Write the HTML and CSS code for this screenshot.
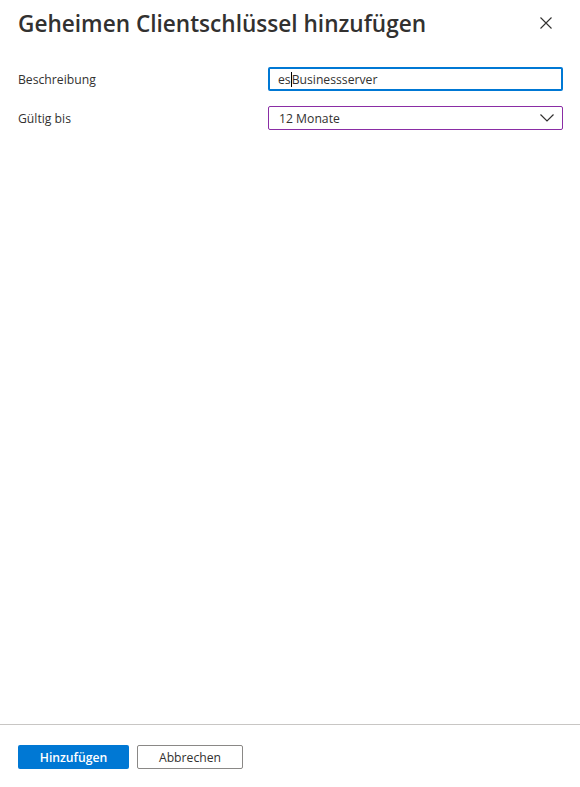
FILE: index.html
```html
<!DOCTYPE html>
<html lang="de">
<head>
  <meta charset="UTF-8">
  <title>Geheimen Clientschlüssel hinzufügen</title>
  <link rel="stylesheet" href="styles.css">
</head>
<body>
  <div class="panel">
    <div class="panel-header">
      <h1 class="panel-title">Geheimen Clientschlüssel hinzufügen</h1>
      <button class="close-btn" aria-label="Schließen">
        <svg width="12" height="12" viewBox="0 0 12 12"><path d="M0.5 0.5L11.5 11.5M11.5 0.5L0.5 11.5" stroke="#323130" stroke-width="1.1" fill="none"/></svg>
      </button>
    </div>
    <div class="panel-body">
      <div class="field-row">
        <label class="field-label">Beschreibung</label>
        <div class="text-input focused"><span>es</span><span class="caret"></span><span>Businessserver</span></div>
      </div>
      <div class="field-row">
        <label class="field-label">Gültig bis</label>
        <div class="dropdown">
          <span>12 Monate</span>
          <svg class="chevron" width="14" height="8" viewBox="0 0 14 8"><path d="M0.5 0.5L7 7L13.5 0.5" stroke="#323130" stroke-width="1.2" fill="none"/></svg>
        </div>
      </div>
    </div>
    <div class="panel-footer">
      <button class="btn btn-primary">Hinzufügen</button>
      <button class="btn btn-default">Abbrechen</button>
    </div>
  </div>
</body>
</html>
```

FILE: styles.css
```css
html, body {
  height: 100%;
  margin: 0;
  padding: 0;
  font-family: 'Open Sans', 'Noto Sans', sans-serif;
  background: #fff;
  color: #323130;
}
.panel {
  height: 100vh;
  display: flex;
  flex-direction: column;
}
.panel-header {
  display: flex;
  align-items: center;
  justify-content: space-between;
  padding: 6px 22px 0 18px;
  height: 34px;
}
.panel-title {
  margin: 0;
  font-size: 22.6px;
  font-weight: 600;
  color: #323130;
}
.close-btn {
  background: none;
  border: none;
  padding: 0;
  width: 24px;
  height: 24px;
  display: flex;
  align-items: center;
  justify-content: center;
  cursor: pointer;
}
.panel-body {
  flex: 1;
  padding: 27px 17px 0 18px;
  display: flex;
  flex-direction: column;
  gap: 15px;
}
.field-row {
  display: flex;
  align-items: center;
}
.field-label {
  width: 250px;
  font-size: 12.2px;
  color: #323130;
}
.text-input, .dropdown {
  flex: 1;
  height: 24px;
  box-sizing: border-box;
  display: flex;
  align-items: center;
  font-size: 12.2px;
  color: #323130;
}
.text-input {
  border: 2px solid #0078d4;
  border-radius: 2px;
  padding: 0 8px;
}
.caret {
  width: 1px;
  height: 15px;
  background: #000;
}
.dropdown {
  border: 1px solid #8a2da5;
  border-radius: 2px;
  padding: 0 8px 0 10px;
  justify-content: space-between;
}
.panel-footer {
  border-top: 1px solid #c8c6c4;
  padding: 20px 18px 18px 18px;
  display: flex;
  gap: 8px;
}
.btn {
  height: 24px;
  box-sizing: border-box;
  font-family: inherit;
  font-size: 12.2px;
  border-radius: 2px;
  cursor: pointer;
}
.btn-primary {
  width: 111px;
  background: #0078d4;
  color: #fff;
  border: none;
  font-weight: 600;
}
.btn-default {
  width: 106px;
  background: #fff;
  color: #323130;
  border: 1px solid #8a8886;
}
```
